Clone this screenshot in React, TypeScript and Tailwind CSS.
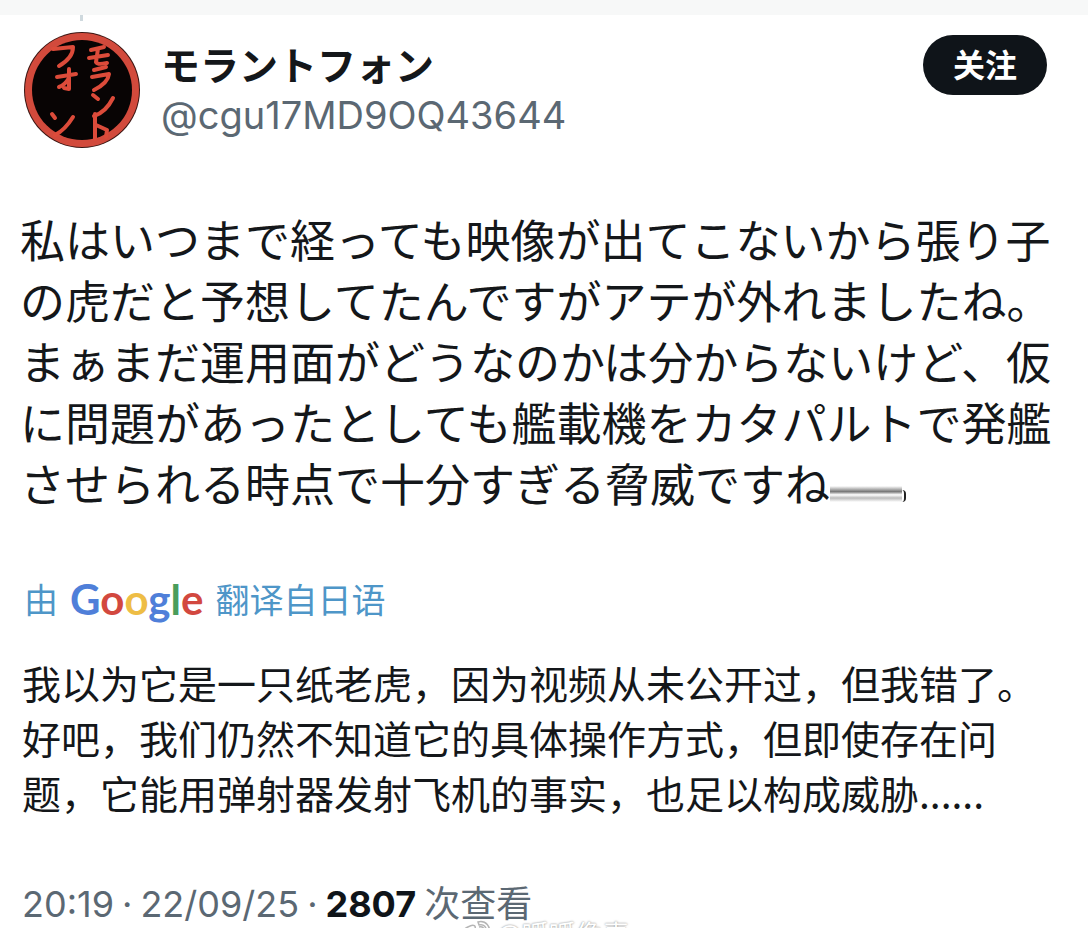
import React from "react"

const googleLetters = [
    { char: "G", color: "text-[#4f7fd9]" },
    { char: "o", color: "text-[#d2483f]" },
    { char: "o", color: "text-[#eebd45]" },
    { char: "g", color: "text-[#4f7fd9]" },
    { char: "l", color: "text-[#4a9d5b]" },
    { char: "e", color: "text-[#d2483f]" },
]

// Round seal: red ring on black with brushed katakana in two columns
function Avatar() {
    return (
        <svg viewBox="0 0 116 116" className="h-[116px] w-[116px] shrink-0" role="img" aria-label="モラントフォン">
            <circle cx="58" cy="58" r="58" fill="#3a1512" />
            <circle cx="58" cy="58" r="57" fill="#d24a3c" />
            <circle cx="58" cy="58" r="50" fill="#080404" />
            <g fill="none" stroke="#dc4b3a" strokeWidth="4" strokeLinecap="round" strokeLinejoin="round">
                <path d="M67 18l13-3M65 26l19-3M74 17l-2 13q1 3 11 1" />
                <path d="M70 38l12-3M68 45l17-3q-1 9-15 16" />
                <path d="M69 63l5 4M89 66q-7 14-19 18" />
                <path d="M71 82v25M72 93l11 5-1 7" />
                <path d="M29 17l20-2q0 11-14 19" />
                <path d="M33 45l19-3M45 37v20l-5-1M45 46q-4 7-10 9" />
                <path d="M28 82l3 4M49 85q-8 13-18 18" />
            </g>
        </svg>
    )
}

function WeiboIcon() {
    return (
        <svg viewBox="0 0 34 28" className="h-7 w-[34px]" fill="white" stroke="#b5b5b5" strokeWidth="1.5" aria-hidden="true">
            <path d="M12 6c4-2 6 0 5 3 5-1 8 1 6 4 4 2 3 7-2 10-8 4-20 2-20-5C1 13 6 8 12 6z" />
            <path d="M20 2c8-2 13 5 11 11l-3-1c1-5-2-8-7-7z" />
            <path d="M21 7c4-1 6 2 5 5" fill="none" />
        </svg>
    )
}

export default function App() {
    return (
        <main className="relative min-h-screen overflow-hidden bg-white font-['Inter','Noto_Sans_CJK_JP',sans-serif] text-[#14171a]">
            <div className="h-[15px] bg-[#f7f8f8]" />
            <div className="ml-20 h-[6px] w-[3px] bg-[#cfd9de]" />

            {/* Author */}
            <header className="flex items-start pt-[11px] pr-[41px] pl-6">
                <Avatar />
                <div className="ml-[21px] flex-1 pt-3">
                    <h1 className="text-[39px] leading-[44px] font-bold">モラントフォン</h1>
                    <p className="text-[38px] leading-[54px] text-[#5b6873]">@cgu17MD9OQ43644</p>
                </div>
                <button className="mt-[3px] h-[60px] w-[124px] rounded-full bg-[#0f1419] pb-1 font-['Noto_Sans_CJK_SC',sans-serif] text-[32px] leading-[56px] font-bold text-white">
                    关注
                </button>
            </header>

            <article>
                <p lang="ja" className="pt-[63px] pl-5 text-[45px] leading-[61px] whitespace-nowrap">
                    私はいつまで経っても映像が出てこないから張り子<br />
                    の虎だと予想してたんですがアテが外れましたね。<br />
                    まぁまだ運用面がどうなのかは分からないけど、仮<br />
                    に問題があったとしても艦載機をカタパルトで発艦<br />
                    させられる時点で十分すぎる脅威ですね
                    {/* smeared end of the last sentence */}
                    <span className="inline-block h-4 w-[72px] bg-[linear-gradient(to_bottom,#fff_0%,#777_35%,#fff_55%,#bbb_75%,#fff_100%)] align-baseline" />
                    <span className="inline-block h-3 w-1 rounded-r-full border-r-2 border-[#222] align-baseline" />
                </p>

                <p lang="zh-CN" className="flex items-center pt-[55px] pl-6 font-['Noto_Sans_CJK_SC',sans-serif] text-[34px] leading-[56px] text-[#4e96c8]">
                    由
                    <a href="#google" className="mx-3 font-['Lato',sans-serif] text-[42px] font-bold">
                        {googleLetters.map((letter, i) => (
                            <span key={i} className={letter.color}>{letter.char}</span>
                        ))}
                    </a>
                    翻译自日语
                </p>

                <p lang="zh-CN" className="pt-7 pl-[22px] font-['Noto_Sans_CJK_SC',sans-serif] text-[39px] leading-[55px] whitespace-nowrap">
                    我以为它是一只纸老虎，因为视频从未公开过，但我错了。<br />
                    好吧，我们仍然不知道它的具体操作方式，但即使存在问<br />
                    题，它能用弹射器发射飞机的事实，也足以构成威胁......
                </p>
            </article>

            <footer lang="zh-CN" className="flex gap-2 pt-14 pl-[22px] font-['Inter','Noto_Sans_CJK_SC',sans-serif] text-[36px] leading-[56px] whitespace-nowrap text-[#5b6873]">
                <time>20:19</time>
                <span>·</span>
                <time>22/09/25</time>
                <span>·</span>
                <strong className="font-bold text-[#0f1419]">2807</strong>
                <span>次查看</span>
            </footer>

            {/* Watermark, mostly cut off by the bottom edge */}
            <div className="absolute -bottom-4 left-[458px] flex items-center gap-1 font-['Noto_Sans_CJK_SC',sans-serif] text-[27px] leading-7 text-white [text-shadow:0_0_2px_#777]">
                <WeiboIcon />
                @呱呱像素
            </div>
        </main>
    )
}
